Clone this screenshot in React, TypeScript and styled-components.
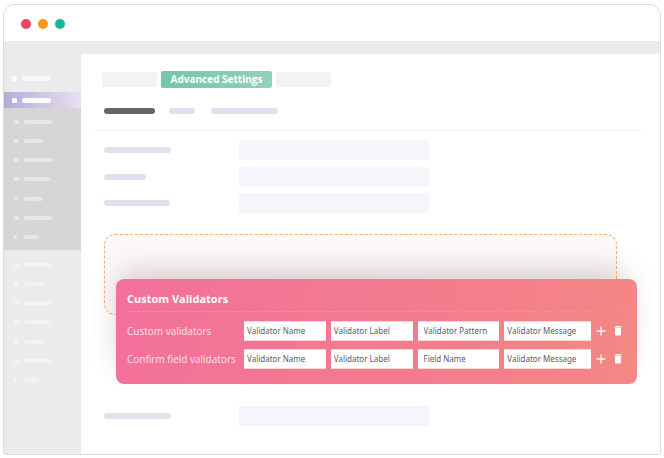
import React from "react";
import styled, { createGlobalStyle } from "styled-components";

const GlobalStyle = createGlobalStyle`
  *, *::before, *::after { box-sizing: border-box; }
  body {
    margin: 0;
    background: #fff;
    font-family: "Open Sans", "Noto Sans", sans-serif;
  }
  button, input { font-family: inherit; }
`;

const Window = styled.div`
  margin: 4px 3px 3px;
  border: 1px solid #dcdddd;
  border-radius: 12px 12px 3px 3px;
  overflow: hidden;
  background: #eaebed;
`;

const TitleBar = styled.header`
  display: flex;
  align-items: center;
  gap: 7px;
  height: 36px;
  padding: 2px 17px 0;
  background: #fff;
`;

const Light = styled.span<{ $color: string }>`
  width: 10px;
  height: 10px;
  border-radius: 50%;
  background: ${(p) => p.$color};
`;

const Body = styled.div`
  display: flex;
`;

const Sidebar = styled.nav`
  flex: 0 0 77px;
  padding-top: 29px;
`;

const NavItem = styled.div<{ $active?: boolean }>`
  display: flex;
  align-items: center;
  gap: 5px;
  height: 16px;
  margin-bottom: ${(p) => (p.$active ? 0 : 6)}px;
  padding-left: 8px;
  color: ${(p) => (p.$active ? "#fbfafd" : "#f8f9f9")};
  background: ${(p) =>
    p.$active ? "linear-gradient(90deg, #b5add7, #e8dff0)" : "transparent"};
`;

const SubMenu = styled.div<{ $open?: boolean }>`
  display: flex;
  flex-direction: column;
  justify-content: space-between;
  height: 142px;
  padding: ${(p) => (p.$open ? "12px 0 11px 10px" : "13px 0 10px 10px")};
  color: ${(p) => (p.$open ? "#e6e7e8" : "#f1f2f3")};
  background: ${(p) => (p.$open ? "#d5d6d8" : "transparent")};
`;

const SubItem = styled.div`
  display: flex;
  align-items: center;
`;

const BulletSlot = styled.span`
  width: 10px;
`;

const Bullet = styled.span<{ $size: number }>`
  display: block;
  width: ${(p) => p.$size}px;
  height: 4px;
  border-radius: 1px;
  background: currentColor;
`;

const MenuBar = styled.span<{ $width: number }>`
  width: ${(p) => p.$width}px;
  height: 4px;
  border-radius: 2px;
  background: currentColor;
`;

const NavBullet = styled.span`
  width: 5px;
  height: 5px;
  border-radius: 1px;
  background: currentColor;
`;

const NavBar = styled.span`
  width: 29px;
  height: 5px;
  border-radius: 2px;
  background: currentColor;
`;

const Main = styled.main`
  flex: 1;
  min-width: 0;
  margin-top: 13px;
  padding: 17px 0 28px;
  background: #fff;
`;

const Tabs = styled.div`
  display: flex;
  align-items: center;
  gap: 4px;
  padding-left: 21px;
`;

const EmptyTab = styled.span`
  width: 55px;
  height: 15px;
  border-radius: 2px;
  background: #f3f3f3;
`;

const ActiveTab = styled.button`
  height: 17px;
  width: 111px;
  padding: 0;
  border: 0;
  border-radius: 2px;
  background: linear-gradient(90deg, #75c6a8, #92d2bc);
  color: #fff;
  font-size: 10px;
  font-weight: 700;
  line-height: 17px;
  text-align: center;
`;

const SubTabs = styled.div`
  display: flex;
  margin-top: 20px;
  padding-left: 23px;
`;

const Pill = styled.span<{ $width: number; $dark?: boolean }>`
  width: ${(p) => p.$width}px;
  height: 6px;
  border-radius: 3px;
  background: ${(p) => (p.$dark ? "#666" : "#dfe1ef")};
`;

const SubTabGap = styled.span<{ $width: number }>`
  width: ${(p) => p.$width}px;
`;

const Divider = styled.hr`
  height: 1px;
  margin: 16px 19px 9px 13px;
  border: 0;
  background: #f0f0f1;
`;

const Fields = styled.div`
  display: flex;
  flex-direction: column;
  justify-content: space-between;
  height: 73px;
`;

const FieldRow = styled.div`
  display: grid;
  grid-template-columns: 135px 190px;
  align-items: center;
  padding-left: 23px;
`;

const FieldBox = styled.div`
  height: 20px;
  border-radius: 2px;
  background: #f5f6fb;
`;

const DropZone = styled.div`
  height: 81px;
  margin: 21px 43px 0 23px;
  border: 1px dashed #fcb273;
  border-radius: 11px;
  background: #fdf9f8;
`;

const Card = styled.section`
  position: relative;
  margin: -36px 23px 22px 35px;
  padding: 12px 12px 15px 11px;
  border-radius: 8px;
  background: linear-gradient(105deg, #f3709c, #f37b8e 55%, #f58884);
  box-shadow: -4px -14px 28px -8px rgba(60, 50, 50, 0.24);
  color: #fff;
`;

const CardTitle = styled.h2`
  margin: 0 3px 9px 0;
  padding-bottom: 4px;
  border-bottom: 1px dashed #f78ba8;
  font-size: 11px;
  font-weight: 700;
  line-height: 16px;
`;

const ValidatorRow = styled.div`
  display: grid;
  grid-template-columns:
    112px repeat(3, minmax(0, 82fr)) minmax(0, 87fr)
    10px 14px;
  align-items: center;
  gap: 5px;
  height: 20px;

  & + & {
    margin-top: 8px;
  }
`;

const RowLabel = styled.span`
  color: #fde3ea;
  font-size: 10px;
  line-height: 16px;
  white-space: nowrap;
`;

const TextInput = styled.input<{ $inset?: boolean }>`
  width: 100%;
  height: 20px;
  padding: 0 0 2px ${(p) => (p.$inset ? 6 : 3)}px;
  border: 1px solid #fbd5da;
  border-width: 1px 0;
  border-radius: 0;
  background: #fff;
  background-clip: padding-box;
  color: #5c5c5c;
  font-family: "Noto Sans", "Open Sans", sans-serif;
  font-size: 8px;
`;

const IconButton = styled.button`
  display: flex;
  justify-content: center;
  padding: 0;
  border: 0;
  background: none;
  color: #fff;
`;

const PlusIcon = () => (
  <svg width="10" height="10" viewBox="0 0 10 10" fill="none">
    <path d="M5 .6v8.800M.6 5h8.800" stroke="currentColor" strokeWidth="1.3" />
  </svg>
);

const TrashIcon = () => (
  <svg width="8" height="10" viewBox="0 0 8 10" fill="currentColor">
    <path d="M2.6 0h2.8l.4.6H7.5v1H.5v-1h1.700z" />
    <path d="M1 2.100h6v6.400a1 1 0 0 1-1 1H2a1 1 0 0 1-1-1z" />
  </svg>
);

const subItems = [
  [5, 29],
  [4, 19],
  [5, 29],
  [5, 26],
  [4, 19],
  [5, 29],
  [3, 15],
];

const validators = [
  {
    label: "Custom validators",
    fields: [
      "Validator Name",
      "Validator Label",
      "Validator Pattern",
      "Validator Message",
    ],
  },
  {
    label: "Confirm field validators",
    fields: [
      "Validator Name",
      "Validator Label",
      "Field Name",
      "Validator Message",
    ],
  },
];

const SubItems = () => (
  <>
    {subItems.map(([bullet, bar], i) => (
      <SubItem key={i}>
        <BulletSlot>
          <Bullet $size={bullet} />
        </BulletSlot>
        <MenuBar $width={bar} />
      </SubItem>
    ))}
  </>
);

export default function App() {
  return (
    <>
      <GlobalStyle />
      <Window>
        <TitleBar>
          <Light $color="#ec4561" />
          <Light $color="#f79a1c" />
          <Light $color="#18b897" />
        </TitleBar>
        <Body>
          <Sidebar>
            <NavItem>
              <NavBullet />
              <NavBar />
            </NavItem>
            <NavItem $active>
              <NavBullet />
              <NavBar />
            </NavItem>
            <SubMenu $open>
              <SubItems />
            </SubMenu>
            <SubMenu>
              <SubItems />
            </SubMenu>
          </Sidebar>
          <Main>
            <Tabs>
              <EmptyTab />
              <ActiveTab type="button">Advanced Settings</ActiveTab>
              <EmptyTab />
            </Tabs>
            <SubTabs>
              <Pill $width={51} $dark />
              <SubTabGap $width={14} />
              <Pill $width={26} />
              <SubTabGap $width={16} />
              <Pill $width={67} />
            </SubTabs>
            <Divider />
            <Fields>
              {[67, 42, 66].map((width) => (
                <FieldRow key={width}>
                  <Pill $width={width} />
                  <FieldBox />
                </FieldRow>
              ))}
            </Fields>
            <DropZone />
            <Card>
              <CardTitle>Custom Validators</CardTitle>
              {validators.map(({ label, fields }, row) => (
                <ValidatorRow key={label} role="group" aria-labelledby={`row-${row}`}>
                  <RowLabel id={`row-${row}`}>{label}</RowLabel>
                  {fields.map((text, i) => (
                    <TextInput
                      key={text}
                      type="text"
                      aria-label={text}
                      defaultValue={text}
                      $inset={i === 2}
                    />
                  ))}
                  <IconButton type="button" aria-label="Add">
                    <PlusIcon />
                  </IconButton>
                  <IconButton type="button" aria-label="Delete">
                    <TrashIcon />
                  </IconButton>
                </ValidatorRow>
              ))}
            </Card>
            <FieldRow>
              <Pill $width={67} />
              <FieldBox />
            </FieldRow>
          </Main>
        </Body>
      </Window>
    </>
  );
}
